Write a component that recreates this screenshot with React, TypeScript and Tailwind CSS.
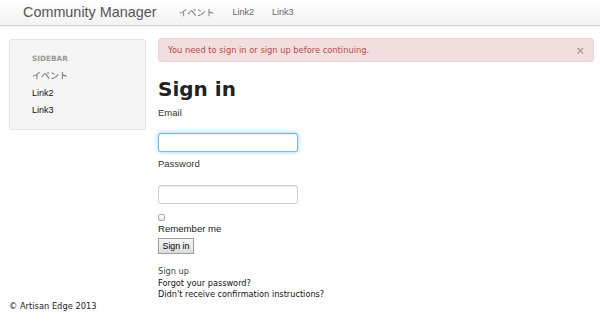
import React from "react";

const verdana = { fontFamily: '"DejaVu Sans", Verdana, sans-serif' };
const helv = { fontFamily: '"Liberation Sans", Arial, "Noto Sans CJK JP", sans-serif' };

export default function App() {
  return (
    <div className="w-[600px] h-[324px] bg-white overflow-hidden text-[#333]" style={helv}>
      {/* Navbar */}
      <div className="h-[26px] flex items-center border-b border-[#d4d4d4] bg-gradient-to-b from-white to-[#f2f2f2] shadow-[0_1px_4px_rgba(0,0,0,0.065)]">
        <div className="ml-[23px] text-[14.4px] text-[#555] leading-none">Community Manager</div>
        <div className="ml-[22px] flex items-center gap-[18px] text-[9px] text-[#666] leading-none">
          <span style={{ fontFamily: '"Noto Sans CJK JP", sans-serif' }}>イベント</span>
          <span>Link2</span>
          <span>Link3</span>
        </div>
      </div>

      {/* Main row */}
      <div className="flex items-start pt-[12px] pl-[9px] pr-[6px]">
        {/* Sidebar */}
        <div className="mt-[1px] w-[137px] h-[91px] bg-[#f5f5f5] border border-[#e3e3e3] rounded-[3px] pl-[22px] pt-[14px] shrink-0">
          <div className="text-[7.3px] leading-[10px] font-bold uppercase text-[#999]" style={verdana}>
            Sidebar
          </div>
          <div className="mt-[3px] flex flex-col text-[9px] leading-[17.5px]">
            <span className="text-[#555]" style={{ fontFamily: '"Noto Sans CJK JP", sans-serif' }}>イベント</span>
            <span className="text-[#111]">Link2</span>
            <span className="text-[#111]">Link3</span>
          </div>
        </div>

        {/* Content */}
        <div className="ml-[12px] flex-1 flex flex-col items-start">
          <div className="w-full h-[24px] flex items-center justify-between bg-[#f2dede] border border-[#eed3d7] rounded-[3px] pl-[9px] pr-[9px]">
            <span className="text-[8.3px] text-[#b94a48] leading-none" style={verdana}>
              You need to sign in or sign up before continuing.
            </span>
            <span className="text-[13px] font-bold leading-none text-black/30">×</span>
          </div>

          <h1 className="mt-[15px] text-[20px] leading-[24px] font-bold text-[#222]" style={verdana}>
            Sign in
          </h1>

          <div className="mt-[6px] text-[9.5px] leading-[12px] text-[#333]">Email</div>
          <div className="mt-[14px] w-[140px] h-[19px] bg-white rounded-[3px] border border-[rgba(82,168,236,0.8)] shadow-[inset_0_1px_1px_rgba(0,0,0,0.075),0_0_4px_rgba(82,168,236,0.6)]" />

          <div className="mt-[6px] text-[9.5px] leading-[12px] text-[#333]">Password</div>
          <div className="mt-[15px] w-[140px] h-[19px] bg-white rounded-[3px] border border-[#ccc] shadow-[inset_0_1px_1px_rgba(0,0,0,0.075)]" />

          <div className="mt-[10px] w-[7px] h-[7px] rounded-[2px] border border-[#aaa] bg-gradient-to-b from-white to-[#e8e8e8]" />
          <div className="mt-[2px] text-[9.6px] leading-[12px] text-[#222]">Remember me</div>
          <div className="mt-[3px] w-[36px] h-[16px] flex items-center justify-center border border-[#a0a0a0] bg-gradient-to-b from-[#f6f6f6] to-[#dcdcdc] text-[8.8px] text-black leading-none">
            Sign in
          </div>

          <div className="mt-[12px] flex flex-col text-[8.2px] leading-[11.5px]" style={verdana}>
            <span className="text-[#444]">Sign up</span>
            <span className="text-[#111]">Forgot your password?</span>
            <span className="text-[#111]">Didn't receive confirmation instructions?</span>
          </div>
        </div>
      </div>

      {/* Footer */}
      <div className="pl-[9px] text-[8.3px] leading-[10px] text-[#222]" style={verdana}>
        © Artisan Edge 2013
      </div>
    </div>
  );
}
